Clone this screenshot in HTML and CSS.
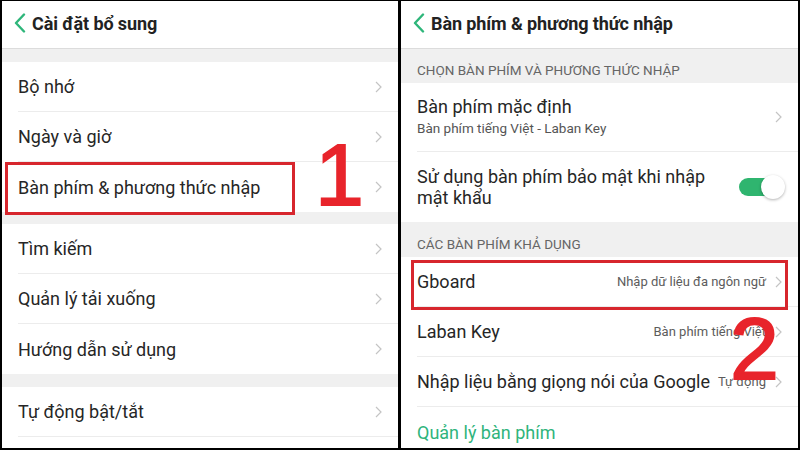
FILE: index.html
```html
<!DOCTYPE html>
<html lang="vi">
<head>
<meta charset="utf-8">
<title>Cài đặt bàn phím</title>
<link rel="stylesheet" href="styles.css">
</head>
<body>
<div class="frame">
  <section class="panel">
    <header class="bar">
      <svg class="back" viewBox="0 0 12 20" width="12" height="20"><polyline points="10,1.5 2,10 10,18.5"/></svg>
      <h1>Cài đặt bổ sung</h1>
    </header>
    <div class="gap g13"></div>
    <ul class="list">
      <li class="row"><span class="label">Bộ nhớ</span><svg class="chev" viewBox="0 0 7 12" width="7" height="12"><polyline points="1,1 6,6 1,11"/></svg></li>
      <li class="row"><span class="label">Ngày và giờ</span><svg class="chev" viewBox="0 0 7 12" width="7" height="12"><polyline points="1,1 6,6 1,11"/></svg></li>
      <li class="row"><span class="label">Bàn phím &amp; phương thức nhập</span><svg class="chev" viewBox="0 0 7 12" width="7" height="12"><polyline points="1,1 6,6 1,11"/></svg></li>
    </ul>
    <div class="gap g12"></div>
    <ul class="list">
      <li class="row"><span class="label">Tìm kiếm</span><svg class="chev" viewBox="0 0 7 12" width="7" height="12"><polyline points="1,1 6,6 1,11"/></svg></li>
      <li class="row"><span class="label">Quản lý tải xuống</span><svg class="chev" viewBox="0 0 7 12" width="7" height="12"><polyline points="1,1 6,6 1,11"/></svg></li>
      <li class="row"><span class="label">Hướng dẫn sử dụng</span><svg class="chev" viewBox="0 0 7 12" width="7" height="12"><polyline points="1,1 6,6 1,11"/></svg></li>
    </ul>
    <div class="gap g13"></div>
    <ul class="list">
      <li class="row sep"><span class="label">Tự động bật/tắt</span><svg class="chev" viewBox="0 0 7 12" width="7" height="12"><polyline points="1,1 6,6 1,11"/></svg></li>
    </ul>
    <div class="hl hl-one"></div>
    <span class="mark mark-one">1</span>
  </section>

  <section class="panel">
    <header class="bar">
      <svg class="back" viewBox="0 0 12 20" width="12" height="20"><polyline points="10,1.5 2,10 10,18.5"/></svg>
      <h1>Bàn phím &amp; phương thức nhập</h1>
    </header>
    <div class="section-title first">CHỌN BÀN PHÍM VÀ PHƯƠNG THỨC NHẬP</div>
    <ul class="list">
      <li class="row tall">
        <div class="stack">
          <span class="label">Bàn phím mặc định</span>
          <span class="sub">Bàn phím tiếng Việt - Laban Key</span>
        </div>
        <svg class="chev" viewBox="0 0 7 12" width="7" height="12"><polyline points="1,1 6,6 1,11"/></svg>
      </li>
      <li class="row tall">
        <span class="label wrap">Sử dụng bàn phím bảo mật khi nhập mật khẩu</span>
        <span class="switch on"><span class="knob"></span></span>
      </li>
    </ul>
    <div class="section-title">CÁC BÀN PHÍM KHẢ DỤNG</div>
    <ul class="list">
      <li class="row"><span class="label">Gboard</span><span class="value">Nhập dữ liệu đa ngôn ngữ</span><svg class="chev" viewBox="0 0 7 12" width="7" height="12"><polyline points="1,1 6,6 1,11"/></svg></li>
      <li class="row sep"><span class="label">Laban Key</span><span class="value">Bàn phím tiếng Việt</span><svg class="chev" viewBox="0 0 7 12" width="7" height="12"><polyline points="1,1 6,6 1,11"/></svg></li>
      <li class="row sep"><span class="label">Nhập liệu bằng giọng nói của Google</span><span class="value">Tự động</span><svg class="chev" viewBox="0 0 7 12" width="7" height="12"><polyline points="1,1 6,6 1,11"/></svg></li>
      <li class="row link"><span class="label">Quản lý bàn phím</span></li>
    </ul>
    <div class="hl hl-two"></div>
    <span class="mark mark-two">2</span>
  </section>
</div>
</body>
</html>
```
FILE: styles.css
```css
* { box-sizing: border-box; }

html, body {
  margin: 0;
  padding: 0;
  background: #000;
}

body {
  font-family: Roboto, "Noto Sans", "Liberation Sans", sans-serif;
  color: #262626;
}

.frame {
  width: 800px;
  height: 450px;
  display: flex;
  gap: 3px;
  padding: 1px 2px 2px 2px;
}

.panel {
  position: relative;
  background: #fff;
  overflow: hidden;
}
.panel:first-child { width: 396px; }
.panel:last-child { flex: 1; }

/* top bar */
.bar {
  height: 48px;
  display: flex;
  align-items: center;
  gap: 6px;
  padding: 0 0 3px 12px;
  border-bottom: 1px solid #dcdcdc;
}
.bar h1 {
  margin: 0;
  font-size: 18px;
  font-weight: 700;
  color: #222;
  letter-spacing: -0.1px;
}
.back {
  flex: none;
}
.back polyline {
  fill: none;
  stroke: #2eb67a;
  stroke-width: 2.4;
  stroke-linecap: round;
  stroke-linejoin: round;
}

/* grey separators between groups */
.gap { background: #f0f0f0; }
.g12 { height: 12px; }
.g13 { height: 13px; }

.list {
  list-style: none;
  margin: 0;
  padding: 0;
}

.row {
  height: 50px;
  margin-left: 16px;
  padding-right: 16px;
  display: flex;
  align-items: center;
  border-bottom: 1px solid #ececec;
}
.row:last-child { border-bottom: none; }
.row.sep { border-bottom: 1px solid #ececec; }
.row.tall { height: 70px; }
.row.tall:first-child { height: 69px; }

.label {
  font-size: 18px;
  color: #262626;
  flex: 1;
  white-space: nowrap;
}
.label.wrap {
  white-space: normal;
  line-height: 21px;
  max-width: 300px;
}
.stack {
  flex: 1;
  display: flex;
  flex-direction: column;
  gap: 2px;
}
.stack .label { line-height: 20px; }
.sub {
  font-size: 13.5px;
  color: #555;
  line-height: 18px;
}
.value {
  font-size: 13px;
  color: #5c5c5c;
  margin-right: 9px;
  white-space: nowrap;
}
.row.link .label { color: #2fb47c; }

.chev { flex: none; }
.chev polyline {
  fill: none;
  stroke: #c4c4c4;
  stroke-width: 1.2;
}

.section-title {
  height: 35px;
  background: #f0f0f0;
  padding: 0 0 5px 16px;
  display: flex;
  align-items: flex-end;
  font-size: 13.5px;
  color: #666;
  line-height: 16px;
}
.section-title.first { height: 34px; }

/* toggle switch */
.switch {
  position: relative;
  flex: none;
  width: 44px;
  height: 18px;
  border-radius: 9px;
  background: #2fb56f;
  margin-left: auto;
  margin-right: -1px;
}
.switch .knob {
  position: absolute;
  right: -2px;
  top: -3px;
  width: 24px;
  height: 24px;
  border-radius: 50%;
  background: #fff;
  box-shadow: 0 1px 3px rgba(0, 0, 0, 0.3);
}

/* red callouts */
.hl {
  position: absolute;
  border: 3px solid #d7262d;
}
.hl-one { left: 3px; top: 161px; width: 290px; height: 53px; }
.hl-two { left: 10px; top: 259px; width: 377px; height: 50px; }

.mark {
  position: absolute;
  font-family: "Liberation Sans", Arial, sans-serif;
  font-size: 88px;
  line-height: 1;
  color: #e8242b;
  -webkit-text-stroke: 1.8px #e8242b;
}
.mark-one { left: 313px; top: 130px; }
.mark-two { left: 329px; top: 304px; }
```
